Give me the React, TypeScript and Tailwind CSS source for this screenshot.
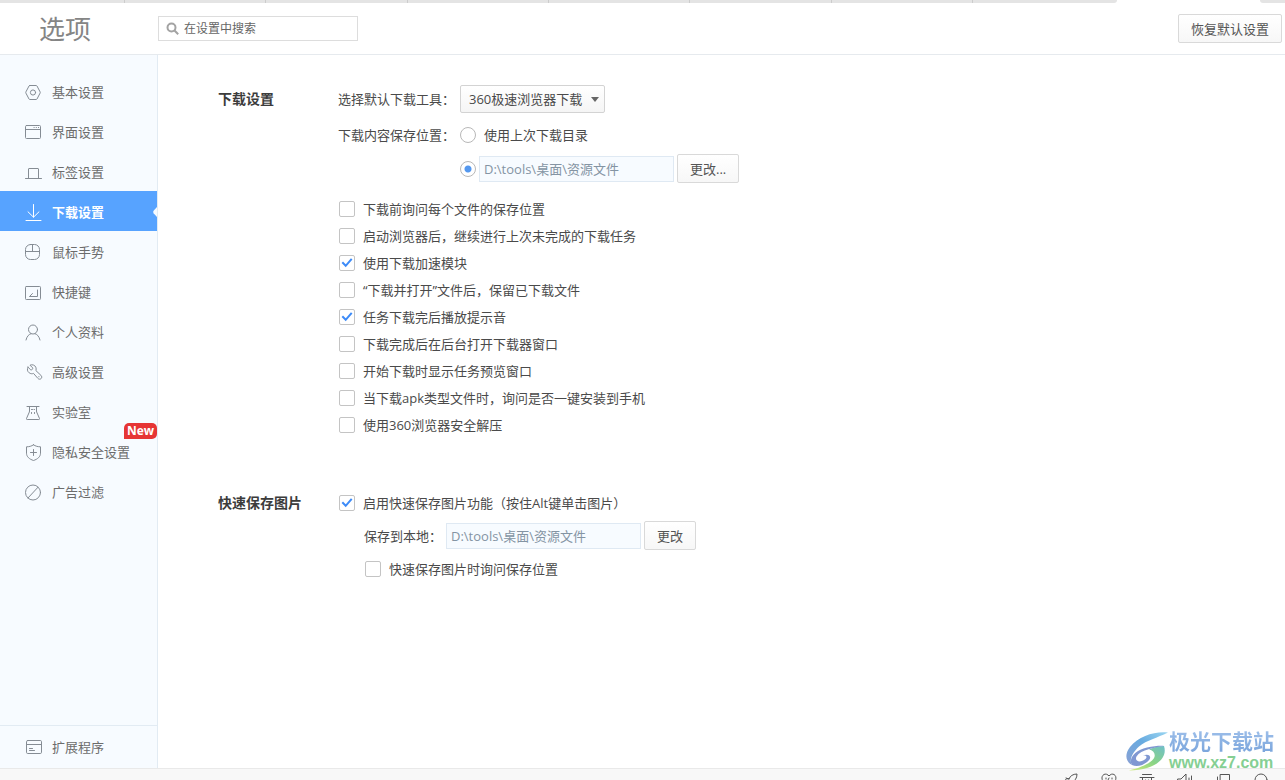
import { useState, type ReactNode } from "react";

const stroke = {
  fill: "none",
  stroke: "currentColor",
  strokeWidth: 1,
  strokeLinecap: "round" as const,
  strokeLinejoin: "round" as const,
};

function Icon({ children }: { children: ReactNode }) {
  return (
    <svg className="size-[18px] shrink-0" viewBox="0 -1 18 18" aria-hidden="true" {...stroke}>
      {children}
    </svg>
  );
}

const icons = {
  basic: (
    <Icon>
      <path d="M4.800 1.500h6.400q.5 0 .8.500l3.100 5.900q.3.600 0 1.200L12 15q-.3.500-.8.500H4.800q-.5 0-.8-.5L.9 9.100q-.3-.6 0-1.200L4 2q.3-.5.8-.5z" />
      <circle cx="8" cy="8.500" r="2.600" />
    </Icon>
  ),
  window: (
    <Icon>
      <rect x=".5" y="1.500" width="15" height="13" rx="1" />
      <path d="M.5 5.500h15M9 3.500h.2M11.200 3.500h.2M13.400 3.500h.2" />
    </Icon>
  ),
  tab: (
    <Icon>
      <path d="M.5 14.500h16M3.500 14.500V5q0-.5.5-.5h9q.5 0 .5.500v9.500" />
    </Icon>
  ),
  download: (
    <Icon>
      <path d="M8.500 .5v12.500M3 7.800l5.500 5.400L14 7.800M1 16.500h15" />
    </Icon>
  ),
  mouse: (
    <Icon>
      <rect x=".5" y=".5" width="14" height="15" rx="5" />
      <path d="M.5 7.500h14M7.500 .5v7" />
    </Icon>
  ),
  shortcut: (
    <Icon>
      <rect x=".5" y="2.500" width="15" height="13" rx=".8" />
      <path d="M12.500 6v6.500H5M7.500 9.500L4.500 12.500h3" />
    </Icon>
  ),
  profile: (
    <Icon>
      <circle cx="8" cy="5.500" r="4.500" />
      <path d="M1 16c.8-3.600 3-6 5.200-6.400M15 16c-.8-3.600-3-6-5.200-6.400" />
    </Icon>
  ),
  wrench: (
    <Icon>
      <path d="M3 3.200l2.800 2.700q.9.100 1.500-.5t.4-1.500L5 1.200c2.200-1 4.900-.2 5.800 2 .5 1.200.5 2.300.1 3.400l5 4.700c1.100 1.100 1.100 2.400.2 3.300s-2.300.8-3.300-.3L8.500 9.400c-1.500.6-3 .4-4.300-.6C2.200 7.300 1.900 5.200 3 3.200z" />
      <path d="M13.800 12.700h.2" />
    </Icon>
  ),
  lab: (
    <Icon>
      <path d="M2 2.500h12M4.500 2.500v4.500q0 1-.6 2L1.500 14.500q-.3 1 .7 1h11.600q1 0 .7-1L12.100 9q-.6-1-.6-2V2.500" />
      <path d="M6.500 5.500h3M6.500 8.500v2.500M9.500 8.500v2.500" strokeDasharray="1 1.500" />
    </Icon>
  ),
  shield: (
    <Icon>
      <path d="M8.500.8c2 1.500 4.600 2 7 2v6.400c0 3.600-3 6-7 7.300-4-1.300-7-3.700-7-7.300V2.800c2.400 0 5-.5 7-2zM8.500 5.500v6M5.500 8.500h6" />
    </Icon>
  ),
  block: (
    <Icon>
      <circle cx="8" cy="8.500" r="7.500" />
      <path d="M3 14L13 3.200" />
    </Icon>
  ),
  extension: (
    <Icon>
      <rect x="1.500" y="1.500" width="15" height="13" rx="1.200" />
      <path d="M1.500 5.500h15M4.500 9.500h3M4.500 11.500h5" />
    </Icon>
  ),
};

const menu = [
  { label: "基本设置", icon: icons.basic },
  { label: "界面设置", icon: icons.window },
  { label: "标签设置", icon: icons.tab },
  { label: "下载设置", icon: icons.download },
  { label: "鼠标手势", icon: icons.mouse },
  { label: "快捷键", icon: icons.shortcut },
  { label: "个人资料", icon: icons.profile },
  { label: "高级设置", icon: icons.wrench },
  { label: "实验室", icon: icons.lab },
  { label: "隐私安全设置", icon: icons.shield, isNew: true },
  { label: "广告过滤", icon: icons.block },
];

const downloadOptions = [
  { label: "下载前询问每个文件的保存位置", on: false },
  { label: "启动浏览器后，继续进行上次未完成的下载任务", on: false },
  { label: "使用下载加速模块", on: true },
  { label: "“下载并打开”文件后，保留已下载文件", on: false },
  { label: "任务下载完后播放提示音", on: true },
  { label: "下载完成后在后台打开下载器窗口", on: false },
  { label: "开始下载时显示任务预览窗口", on: false },
  { label: "当下载apk类型文件时，询问是否一键安装到手机", on: false },
  { label: "使用360浏览器安全解压", on: false },
];

function TabStrip() {
  return (
    <div className="flex h-[3px] shrink-0 bg-white">
      <div className="grid w-[1117px] grid-cols-[125px_repeat(6,1fr)_144px] overflow-hidden rounded-br-[3px] bg-[#e4e4e4]">
        {[0, 1, 2, 3, 4, 5, 6].map((n) => (
          <span key={n} className="border-r border-[#cccccc]" />
        ))}
      </div>
      <div className="w-[143px]" />
      <div className="flex-1 rounded-bl-[3px] bg-[#e4e4e4]" />
    </div>
  );
}

function PushButton({ children }: { children: ReactNode }) {
  return (
    <button
      type="button"
      className="h-[29px] shrink-0 rounded-[2px] border border-[#d9d9d9] bg-linear-to-b from-white to-[#f7f7f7] px-3 text-[#555555]"
    >
      {children}
    </button>
  );
}

function CheckOption({ label, on }: { label: string; on: boolean }) {
  return (
    <label className="flex h-[27px] items-center gap-2 pl-px">
      <span className="grid">
        <input
          type="checkbox"
          defaultChecked={on}
          className="peer col-start-1 row-start-1 size-4 appearance-none rounded-[2px] border border-[#c4c4c4] bg-white"
        />
        <svg
          className="pointer-events-none invisible col-start-1 row-start-1 size-4 peer-checked:visible"
          viewBox="0 0 16 16"
          fill="none"
          stroke="#3d8bf8"
          strokeWidth="2"
          aria-hidden="true"
        >
          <path d="M3.300 7.300l3.400 3.500 6-7" />
        </svg>
      </span>
      {label}
    </label>
  );
}

function PathField({ label }: { label: string }) {
  return (
    <input
      type="text"
      aria-label={label}
      defaultValue="D:\tools\桌面\资源文件"
      className="h-[26px] w-[195px] border border-[#dfe9f3] bg-[#f7fbff] px-1 text-[#8494a3]"
    />
  );
}

const radioClass =
  "size-4 shrink-0 appearance-none rounded-full border border-[#b8b8b8] bg-white checked:bg-radial checked:from-[#5598ee] checked:from-[3px] checked:to-white checked:to-[4px]";

function Section({ title, children }: { title: string; children: ReactNode }) {
  return (
    <section className="flex">
      <h2 className="w-[120px] shrink-0 text-sm leading-[27px] font-bold text-[#3c3c3c]">{title}</h2>
      <div className="min-w-0 flex-1">{children}</div>
    </section>
  );
}

function Watermark() {
  return (
    <div className="pointer-events-none absolute right-[11px] bottom-2 flex items-center">
      <svg className="h-10 w-11" viewBox="0 0 44 40" aria-hidden="true">
        <defs>
          <linearGradient id="swoosh-blue" x1="0" y1="1" x2="1" y2="0">
            <stop offset="0" stopColor="#8aa0d4" />
            <stop offset=".55" stopColor="#68abe0" />
            <stop offset="1" stopColor="#9bd6f1" />
          </linearGradient>
          <linearGradient id="swoosh-green" x1="0" y1="1" x2="1" y2="0">
            <stop offset="0" stopColor="#d3ec7c" />
            <stop offset=".5" stopColor="#8ad484" />
            <stop offset="1" stopColor="#6fbfc9" />
          </linearGradient>
        </defs>
        <path
          d="M43 1.500C30 0 14 5 5 16C-1 24 1 31 7 34C4 29 7 22 14 15.500C22 9 32 7 43 1.500z"
          fill="url(#swoosh-blue)"
        />
        <path
          d="M39 15C43 27 31 39 4 39.500C18 36 28 31 29.500 26C30.500 22 28 19.500 24 18.500C29 16 34 15 39 15z"
          fill="url(#swoosh-green)"
        />
        <path
          d="M7 34C3 28 10 19 22 16.500C29 15 36 14.500 39 15C30 16.500 16 18.500 11.500 25.500C9 31 16 32 20.500 28C22.500 26 21.500 24 18 24.500C24 22 26.500 25.500 24.500 28.500C21 33 13 37 7 34z"
          fill="#8098d2"
        />
      </svg>
      <div className="flex flex-col gap-px">
        <span className="bg-linear-to-b from-[#9fc0ea] to-[#7aa5dc] bg-clip-text text-[21px] leading-6 font-bold text-transparent">
          极光下载站
        </span>
        <span className="font-['Liberation_Sans',sans-serif] text-base leading-[18px] font-bold text-[#85cf93]">
          www.xz7.com
        </span>
      </div>
    </div>
  );
}

function StatusBar() {
  const shapes = [
    <path key="rocket" d="M2 10c-1-3 1-5 4-4 1-3 4-5 8-5 0 4-2 7-5 8l-3 4zM3 5l3 1" />,
    <path key="hearts" d="M8 14L2 8C-1 4 3-1 7 2l1 1 1-1c4-3 8 2 5 6zM5 5v1M11 5v1M8 5l-1 2" />,
    <path key="trash" d="M3.500 1.500h9M1 4.500h14M3.500 4.500V15h9V4.500M6.500 7v6M9.500 7v6" />,
    <path key="sound" d="M1 6h3l5-5v14l-5-4H1zM12 5v6M14.500 3v10" />,
    <path key="pages" d="M5.500 1.500h9v11h-9zM2.500 4v11" />,
    <path key="search" d="M14 7A6 6 0 1 1 2 7a6 6 0 0 1 12 0zM12 12l4 4" />,
  ];
  return (
    <footer className="flex h-3 shrink-0 items-start justify-end gap-[22px] overflow-hidden border-t border-[#e9e9e9] bg-[#f8f8f8] pt-1 pr-4 text-[#555555]">
      {shapes.map((shape, i) => (
        <svg key={i} className="size-4 shrink-0" viewBox="0 0 16 16" aria-hidden="true" {...stroke}>
          {shape}
        </svg>
      ))}
    </footer>
  );
}

export default function App() {
  const [active, setActive] = useState("下载设置");
  return (
    <div
      lang="zh-CN"
      className="relative flex min-h-screen flex-col bg-white font-['Open_Sans','Noto_Sans_CJK_SC',sans-serif] text-[13px] leading-5 text-[#4a4a4a]"
    >
      <TabStrip />
      <header className="flex h-[52px] shrink-0 items-center border-b border-[#e6eaee] pr-[3px]">
        <h1 className="w-[158px] pl-[39px] text-[26px] leading-[38px] text-[#858585]">选项</h1>
        <label className="flex h-[25px] w-[200px] items-center gap-[5px] border border-[#dddddd] px-[7px]">
          <svg
            className="size-[13px] shrink-0"
            viewBox="0 0 13 13"
            fill="none"
            stroke="#a3a3a3"
            strokeWidth="2"
            aria-hidden="true"
          >
            <circle cx="5.500" cy="5.500" r="4" />
            <path d="M8.500 8.500l3.700 3.700" />
          </svg>
          <input
            type="text"
            aria-label="在设置中搜索"
            placeholder="在设置中搜索"
            className="h-[23px] min-w-0 flex-1 text-xs outline-none placeholder:text-[#666666]"
          />
        </label>
        <div className="ml-auto flex">
          <PushButton>恢复默认设置</PushButton>
        </div>
      </header>

      <div className="flex flex-1">
        <nav className="flex w-[158px] shrink-0 flex-col border-r border-[#e2ebf3] bg-[#f7fbff] pt-4 text-[#6c6c6c]">
          <ul>
            {menu.map((item) => {
              const selected = item.label === active;
              return (
                <li key={item.label} className="relative">
                  <button
                    type="button"
                    onClick={() => setActive(item.label)}
                    className={
                      selected
                        ? "flex h-10 w-full items-center bg-[#57a3ff] pt-px pl-[25px] font-bold text-white"
                        : "flex h-10 w-full items-center pt-px pl-[25px]"
                    }
                  >
                    <span className={selected ? "text-white" : "text-[#858c94]"}>{item.icon}</span>
                    <span className="pl-[9px]">{item.label}</span>
                    {selected && (
                      <svg className="ml-auto h-[10px] w-1" viewBox="0 0 4 10" fill="#f7fbff" aria-hidden="true">
                        <path d="M4 0v10L.6 6.200Q-.2 5 .6 3.800z" />
                      </svg>
                    )}
                  </button>
                  {item.isNew && (
                    <span className="absolute -top-2 right-0 flex h-4 items-center rounded-[5px] rounded-bl-none bg-[#e63535] px-[3px] text-xs leading-4 font-bold text-white">
                      New
                    </span>
                  )}
                </li>
              );
            })}
          </ul>
          <div className="mt-auto border-t border-[#e2ebf3]">
            <a href="#extensions" className="flex h-[42px] items-center pl-[25px]">
              <span className="text-[#858c94]">{icons.extension}</span>
              <span className="pl-[9px]">扩展程序</span>
            </a>
          </div>
        </nav>

        <main className="flex flex-1 flex-col gap-[51px] pt-[30px] pl-[60px]">
          <Section title="下载设置">
            <div className="flex items-center">
              <label htmlFor="tool" className="w-[122px] shrink-0">
                选择默认下载工具：
              </label>
              <div className="grid w-[145px] items-center">
                <select
                  id="tool"
                  className="col-start-1 row-start-1 h-7 appearance-none rounded-[2px] border border-[#d3d3d3] bg-linear-to-b from-white to-[#f5f5f5] pl-2"
                >
                  <option>360极速浏览器下载</option>
                </select>
                <svg
                  className="pointer-events-none col-start-1 row-start-1 mr-[6px] h-[5px] w-2 justify-self-end"
                  viewBox="0 0 8 5"
                  fill="#666666"
                  aria-hidden="true"
                >
                  <path d="M0 0h8L4 5z" />
                </svg>
              </div>
            </div>
            <div role="radiogroup" aria-label="下载内容保存位置" className="mt-[10px]">
              <div className="flex h-6 items-center">
                <span className="w-[122px] shrink-0">下载内容保存位置：</span>
                <label className="flex items-center gap-2">
                  <input type="radio" name="folder" className={radioClass} />
                  使用上次下载目录
                </label>
              </div>
              <div className="mt-[7px] flex items-center gap-[3px] pl-[122px]">
                <input type="radio" name="folder" defaultChecked aria-label="指定下载目录" className={radioClass} />
                <PathField label="下载目录" />
                <PushButton>更改...</PushButton>
              </div>
            </div>
            <div className="mt-3">
              {downloadOptions.map((option) => (
                <CheckOption key={option.label} {...option} />
              ))}
            </div>
          </Section>

          <Section title="快速保存图片">
            <CheckOption label="启用快速保存图片功能（按住Alt键单击图片）" on />
            <div className="mt-[5px] flex items-center gap-[3px] pl-[26px]">
              <span className="w-[79px] shrink-0">保存到本地：</span>
              <PathField label="保存到本地" />
              <PushButton>更改</PushButton>
            </div>
            <div className="mt-[5px] pl-[26px]">
              <CheckOption label="快速保存图片时询问保存位置" on={false} />
            </div>
          </Section>
        </main>
      </div>

      <StatusBar />
      <Watermark />
    </div>
  );
}
